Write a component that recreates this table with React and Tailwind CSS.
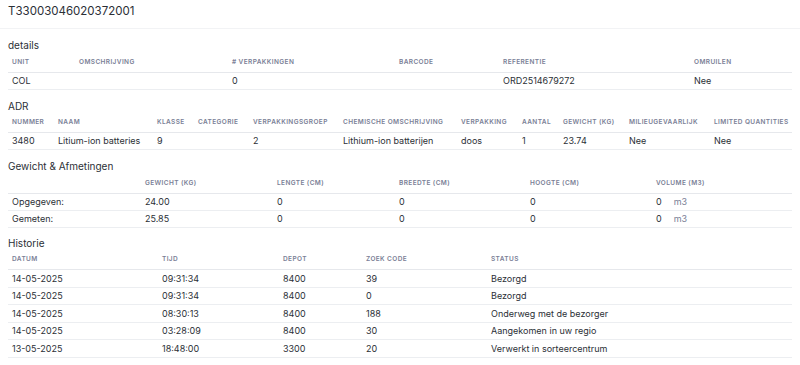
import React from "react";

const TH = "text-left font-semibold uppercase whitespace-nowrap text-[6.5px] tracking-[0.06em] text-[#7a8096] px-1 h-[18px] align-middle";
const TD = "text-left px-1 align-middle whitespace-nowrap text-[9px] text-[#2b2f36]";

function Heading({ children, tight }) {
  return (
    <div className={(tight ? "pt-[9px] " : "pt-[10px] ") + "pb-[3px] text-[10px] leading-[12px] text-[#2b2f36]"}>{children}</div>
  );
}

function Table({ widths, headers, rows, rowH }) {
  return (
    <table className="w-full table-fixed border-collapse">
      <colgroup>
        {widths.map((w, i) => (
          <col key={i} style={w ? { width: w } : undefined} />
        ))}
      </colgroup>
      <thead>
        <tr className="border-b border-[#e6e8ec]">
          {headers.map((h, i) => (
            <th key={i} className={TH}>{h}</th>
          ))}
        </tr>
      </thead>
      <tbody>
        {rows.map((r, ri) => (
          <tr key={ri} className="border-b border-[#eceef1]">
            {r.map((c, ci) => (
              <td key={ci} className={TD + " " + rowH}>{c}</td>
            ))}
          </tr>
        ))}
      </tbody>
    </table>
  );
}

export default function App() {
  const vol = (
    <span>
      0<span className="ml-[12px] text-[#7a8096]">m3</span>
    </span>
  );
  return (
    <div className="w-[800px] h-[365px] bg-white overflow-hidden" style={{ fontFamily: "Inter, 'Noto Sans', sans-serif" }}>
      <div className="h-[29px] border-b border-[#f2f3f5] px-2 pt-[4px] text-[11.5px] leading-[15px] text-[#2b2f36]">
        T33003046020372001
      </div>
      <div className="px-2">
        <Heading>details</Heading>
        <Table
          rowH="h-[17px]"
          widths={[67, 153, 167, 104, 191, null]}
          headers={["Unit", "Omschrijving", "# Verpakkingen", "Barcode", "Referentie", "Omruilen"]}
          rows={[["COL", "", "0", "", "ORD2514679272", "Nee"]]}
        />
        <Heading>ADR</Heading>
        <Table
          rowH="h-[17px]"
          widths={[46, 99, 41, 55, 90, 118, 61, 41, 66, 85, null]}
          headers={["Nummer", "Naam", "Klasse", "Categorie", "Verpakkingsgroep", "Chemische omschrijving", "Verpakking", "Aantal", "Gewicht (kg)", "Milieugevaarlijk", "Limited quantities"]}
          rows={[["3480", "Litium-ion batteries", "9", "", "2", "Lithium-ion batterijen", "doos", "1", "23.74", "Nee", "Nee"]]}
        />
        <Heading>Gewicht &amp; Afmetingen</Heading>
        <Table
          rowH="h-[17px]"
          widths={[133, 132, 122, 131, 126, null]}
          headers={["", "Gewicht (kg)", "Lengte (cm)", "Breedte (cm)", "Hoogte (cm)", "Volume (m3)"]}
          rows={[
            ["Opgegeven:", "24.00", "0", "0", "0", vol],
            ["Gemeten:", "25.85", "0", "0", "0", vol],
          ]}
        />
        <Heading tight>Historie</Heading>
        <Table
          rowH="h-[17.5px]"
          widths={[150, 121, 83, 125, null]}
          headers={["Datum", "Tijd", "Depot", "Zoek code", "Status"]}
          rows={[
            ["14-05-2025", "09:31:34", "8400", "39", "Bezorgd"],
            ["14-05-2025", "09:31:34", "8400", "0", "Bezorgd"],
            ["14-05-2025", "08:30:13", "8400", "188", "Onderweg met de bezorger"],
            ["14-05-2025", "03:28:09", "8400", "30", "Aangekomen in uw regio"],
            ["13-05-2025", "18:48:00", "3300", "20", "Verwerkt in sorteercentrum"],
          ]}
        />
      </div>
    </div>
  );
}
